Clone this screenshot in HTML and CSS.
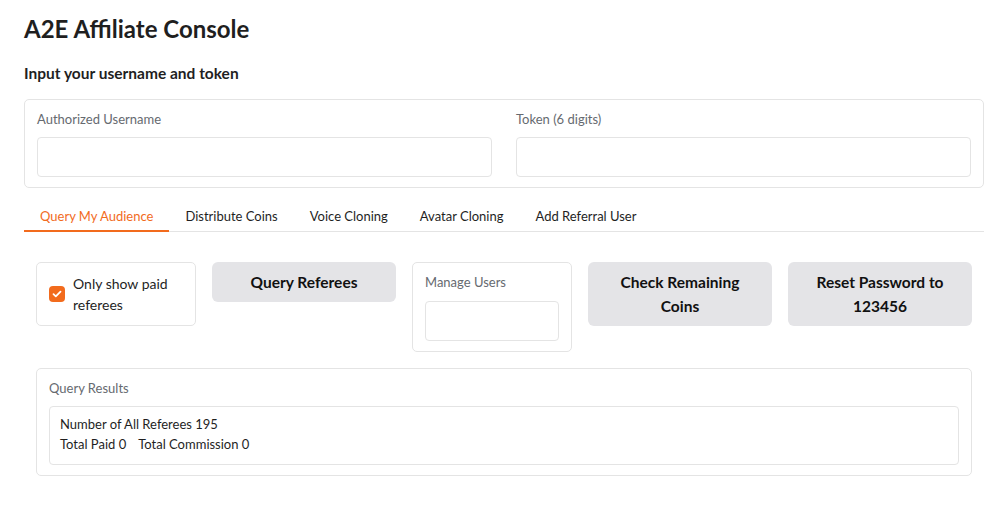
FILE: index.html
```html
<!DOCTYPE html>
<html lang="en">
<head>
    <meta charset="UTF-8">
    <title>A2E Affiliate Console</title>
    <link rel="stylesheet" href="styles.css">
</head>
<body>
<div class="app">
    <h1 class="title">A2E Affiliate Console</h1>
    <h3 class="subtitle">Input your username and token</h3>

    <!-- credentials -->
    <div class="block cred-row">
        <label class="field">
            <span class="field-label">Authorized Username</span>
            <input type="text" class="text-input">
        </label>
        <label class="field">
            <span class="field-label">Token (6 digits)</span>
            <input type="text" class="text-input">
        </label>
    </div>

    <!-- tabs -->
    <div class="tabs">
        <button class="tab active">Query My Audience</button>
        <button class="tab">Distribute Coins</button>
        <button class="tab">Voice Cloning</button>
        <button class="tab">Avatar Cloning</button>
        <button class="tab">Add Referral User</button>
    </div>

    <div class="tab-panel">
        <div class="actions">
            <label class="block check-box">
                <span class="checkmark">
                    <svg width="10" height="8" viewBox="0 0 10 8"><path d="M1.5 4.2 L3.8 6.3 L8.5 1.6" fill="none" stroke="#fff" stroke-width="1.8" stroke-linecap="round" stroke-linejoin="round"/></svg>
                </span>
                <span class="check-text">Only show paid referees</span>
            </label>
            <button class="btn">Query Referees</button>
            <label class="block field small-field">
                <span class="field-label">Manage Users</span>
                <input type="text" class="text-input">
            </label>
            <button class="btn">Check Remaining Coins</button>
            <button class="btn">Reset Password to 123456</button>
        </div>

        <div class="block results">
            <span class="field-label">Query Results</span>
            <div class="result-box">
                <p>Number of All Referees 195</p>
                <p>Total Paid 0<span class="sep">Total Commission 0</span></p>
            </div>
        </div>
    </div>
</div>
</body>
</html>
```

FILE: styles.css
```css
body {
    margin: 0;
    background-color: #ffffff;
    font-family: Lato, "Noto Sans", sans-serif;
    color: #1f1f1f;
}
.app {
    width: 960px;
    padding: 12px 24px 24px;
}
.title {
    margin: 0;
    font-size: 24px;
    line-height: 34px;
    font-weight: 700;
}
.subtitle {
    margin: 17px 0 15px;
    font-size: 15.5px;
    line-height: 21px;
    font-weight: 700;
}
.block {
    border: 1px solid #e4e4e4;
    border-radius: 5px;
    background: #fff;
}
.cred-row {
    display: grid;
    grid-template-columns: 1fr 1fr;
    gap: 24px;
    padding: 10px 12px 10px;
}
.field {
    display: flex;
    flex-direction: column;
}
.field-label {
    font-size: 13px;
    line-height: 18px;
    color: #666a70;
    margin-bottom: 9px;
}
.text-input {
    height: 40px;
    box-sizing: border-box;
    border: 1px solid #e4e4e4;
    border-radius: 4px;
    padding: 0 10px;
    font: inherit;
}
.tabs {
    display: flex;
    margin-top: 17px;
    border-bottom: 1px solid #e4e4e4;
}
.tab {
    background: none;
    border: none;
    border-bottom: 2px solid transparent;
    margin-bottom: -1px;
    padding: 2px 16px 5px;
    font-family: inherit;
    font-size: 13px;
    line-height: 18px;
    color: #1f1f1f;
}
.tab.active {
    color: #f26b1d;
    border-bottom-color: #f26b1d;
}
.tab-panel {
    padding: 30px 12px 12px;
}
.actions {
    display: grid;
    grid-template-columns: 160px 184px 160px 184px 184px;
    gap: 16px;
    align-items: start;
}
.check-box {
    display: flex;
    align-items: center;
    gap: 8px;
    padding: 10px 12px;
    height: 64px;
    box-sizing: border-box;
}
.checkmark {
    flex: none;
    width: 16px;
    height: 16px;
    border-radius: 4px;
    background: #f26b1d;
    display: flex;
    align-items: center;
    justify-content: center;
}
.check-text {
    font-size: 14px;
    line-height: 21px;
}
.btn {
    min-height: 40px;
    padding: 8px 16px;
    border: none;
    border-radius: 6px;
    background: #e4e4e7;
    font-family: inherit;
    font-size: 15.5px;
    line-height: 24px;
    font-weight: 700;
    color: #111;
}
.small-field {
    padding: 10px 12px 10px;
}
.small-field .field-label {
    margin-bottom: 10px;
}
.results {
    margin-top: 16px;
    padding: 10px 12px 10px;
}
.results .field-label {
    display: block;
}
.result-box {
    border: 1px solid #e4e4e4;
    border-radius: 4px;
    padding: 7px 10px 10px;
    font-size: 13px;
    line-height: 20px;
}
.result-box p {
    margin: 0;
}
.sep {
    margin-left: 12px;
}
```
